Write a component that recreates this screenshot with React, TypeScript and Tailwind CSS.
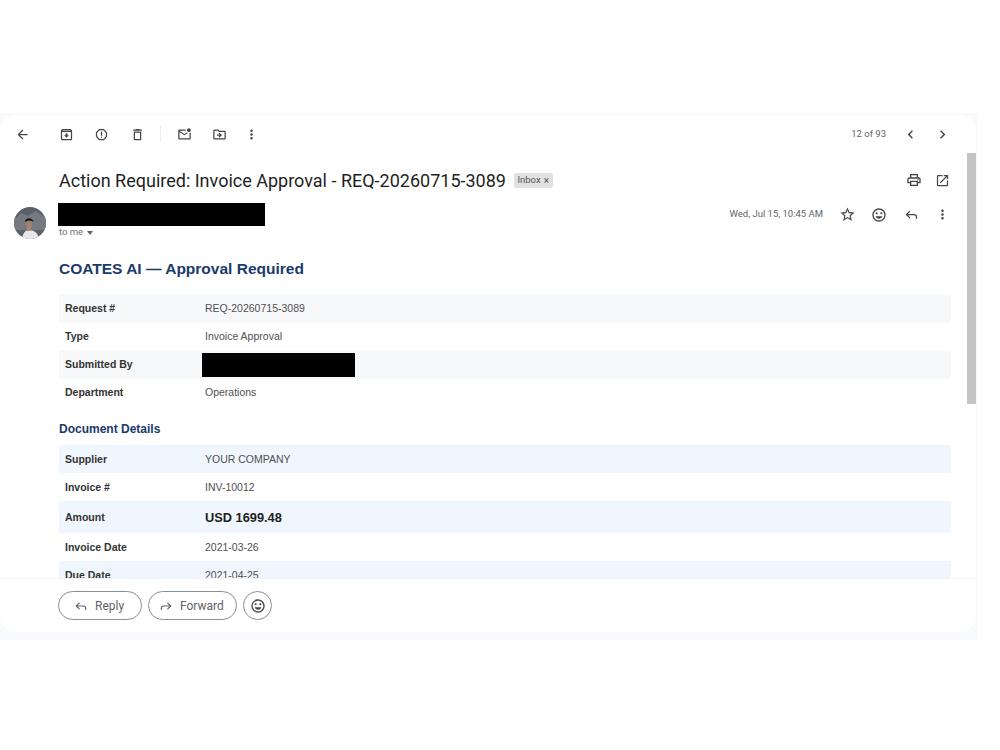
import type { ReactNode } from 'react';
import { Forward, Reply } from 'lucide-react';
import {
  MdArrowBack,
  MdChevronLeft,
  MdChevronRight,
  MdMoreVert,
  MdOpenInNew,
  MdOutlineArchive,
  MdOutlineDelete,
  MdOutlineDriveFileMove,
  MdOutlineInsertEmoticon,
  MdOutlineMarkEmailUnread,
  MdOutlinePrint,
  MdOutlineReport,
  MdStarBorder,
} from 'react-icons/md';

const requestRows = [
  { label: 'Request #', value: 'REQ-20260715-3089', shaded: true },
  { label: 'Type', value: 'Invoice Approval' },
  { label: 'Submitted By', redacted: true, shaded: true },
  { label: 'Department', value: 'Operations' },
];

const documentRows = [
  { label: 'Supplier', value: 'YOUR COMPANY', shaded: true },
  { label: 'Invoice #', value: 'INV-10012' },
  { label: 'Amount', value: 'USD 1699.48', shaded: true, big: true },
  { label: 'Invoice Date', value: '2021-03-26' },
  { label: 'Due Date', value: '2021-04-25', shaded: true },
];

type RowProps = {
  label: string;
  value?: string;
  shaded?: boolean;
  redacted?: boolean;
  big?: boolean;
  tint: string;
};

const Row = ({ label, value, shaded, redacted, big, tint }: RowProps) => (
  <div className={`flex items-center pl-[6px] ${big ? 'h-[32px]' : 'h-[28px]'} ${shaded ? tint : ''}`}>
    <div className="w-[140px] shrink-0 text-[10.5px] font-bold text-[#333333]">{label}</div>
    {redacted ? (
      <div className="-ml-[3px] h-[24px] w-[153px] bg-black" />
    ) : (
      <div className={big ? 'text-[12.8px] font-bold text-[#222222]' : 'text-[10.5px] text-[#505050]'}>{value}</div>
    )}
  </div>
);

const IconSlot = ({ children, className = 'w-[32px]' }: { children: ReactNode; className?: string }) => (
  <div className={`flex items-center justify-center text-[#444746] ${className}`}>{children}</div>
);

const Avatar = () => (
  <svg width="32" height="32" viewBox="0 0 32 32" className="shrink-0 rounded-full">
    <rect width="32" height="32" fill="#5b6068" />
    <path d="M0 13 L7 6 L14 9 L22 4 L32 11 L32 23 L0 23 Z" fill="#757a80" />
    <path d="M8 32 C9 25 12 23 15 23 C19 23 24 25 25 32 Z" fill="#e6e7ea" />
    <rect x="13" y="19" width="4" height="5" fill="#a98671" />
    <circle cx="15" cy="16" r="3.6" fill="#a07f6c" />
    <path d="M11 15 C11 10 19 10 19.500 15 C17 13 14 13 11 15 Z" fill="#17181c" />
  </svg>
);

export default function App() {
  return (
    <div className="h-[750px] w-[1000px] bg-white pt-[113px] font-['Liberation_Sans',Arial,sans-serif]">
      <div className="h-[527px] w-[978px] bg-[#f8fafd] pt-[2px]">
        <div className="relative flex h-[517px] w-[976px] flex-col overflow-hidden rounded-2xl bg-white">
          {/* Toolbar */}
          <div className="flex h-[38px] shrink-0 items-center pl-[6px] pr-[18px]">
            <IconSlot><MdArrowBack size={15} /></IconSlot>
            <div className="ml-[10px] flex items-center">
              <IconSlot className="w-[36px]"><MdOutlineArchive size={15} /></IconSlot>
              <IconSlot className="w-[35px]"><MdOutlineReport size={15} /></IconSlot>
              <IconSlot className="w-[36px]"><MdOutlineDelete size={15} /></IconSlot>
              <div className="ml-[5px] mr-[5px] h-[16px] w-px bg-[#eeeeee]" />
              <IconSlot className="w-[36px]"><MdOutlineMarkEmailUnread size={15} /></IconSlot>
              <IconSlot className="w-[35px]"><MdOutlineDriveFileMove size={15} /></IconSlot>
              <IconSlot className="w-[28px]"><MdMoreVert size={15} /></IconSlot>
            </div>
            <div className="ml-auto flex items-center">
              <span className="mr-[8px] font-['Roboto',sans-serif] text-[9.5px] text-[#5f6368]">12 of 93</span>
              <IconSlot><MdChevronLeft size={17} /></IconSlot>
              <IconSlot><MdChevronRight size={17} /></IconSlot>
            </div>
          </div>

          {/* Scrollable message */}
          <div className="min-h-0 flex-1 overflow-hidden pl-[14px] pr-[25px]">
            {/* Subject */}
            <div className="flex h-[50px] items-center pt-[4px]">
              <h1 className="ml-[45px] font-['Roboto',sans-serif] text-[18px] text-[#1f1f1f]">
                Action Required: Invoice Approval - REQ-20260715-3089
              </h1>
              <span className="ml-[8px] flex h-[15px] items-center gap-[3px] rounded-[2px] bg-[#e1e1e1] px-[3.5px] font-['Roboto',sans-serif] text-[9.5px] text-[#555555]">
                Inbox <span className="text-[10px]">×</span>
              </span>
              <div className="-mr-[6px] ml-auto flex items-center text-[#444746]">
                <IconSlot className="w-[29px]"><MdOutlinePrint size={16} /></IconSlot>
                <IconSlot className="w-[29px]"><MdOpenInNew size={15} /></IconSlot>
              </div>
            </div>

            {/* Sender */}
            <div className="flex h-[46px] items-start">
              <div className="mt-[4px]"><Avatar /></div>
              <div className="ml-[12px]">
                <div className="h-[23px] w-[207px] bg-black" />
                <div className="-mt-[1px] ml-[1px] flex items-center gap-[4px] font-['Roboto',sans-serif] text-[9.5px] text-[#6f7377]">
                  to me
                  <span className="mt-[1px] h-0 w-0 border-x-[3.5px] border-t-[4px] border-x-transparent border-t-[#5f6368]" />
                </div>
              </div>
              <div className="-mr-[6px] ml-auto flex items-center pt-[3px]">
                <span className="mr-[8px] font-['Roboto',sans-serif] text-[9.5px] text-[#5f6368]">Wed, Jul 15, 10:45 AM</span>
                <IconSlot><MdStarBorder size={17} /></IconSlot>
                <IconSlot><MdOutlineInsertEmoticon size={16} /></IconSlot>
                <IconSlot><Reply size={15} strokeWidth={2} /></IconSlot>
                <IconSlot className="w-[30px]"><MdMoreVert size={15} /></IconSlot>
              </div>
            </div>

            {/* Body */}
            <div className="ml-[45px]">
              <h2 className="mt-[10px] text-[15.5px] font-bold leading-[20px] text-[#1a3a6b]">COATES AI — Approval Required</h2>
              <div className="mt-[16px]">
                {requestRows.map((row) => (
                  <Row key={row.label} {...row} tint="bg-[#f7f8fa]" />
                ))}
              </div>
              <h3 className="mb-[8px] mt-[14px] text-[12px] font-bold leading-[16px] text-[#1a3a6b]">Document Details</h3>
              <div className="[&>div]:pt-[2px]">
                {documentRows.map((row) => (
                  <Row key={row.label} {...row} tint="bg-[#f0f6fd]" />
                ))}
              </div>
            </div>
          </div>

          {/* Reply bar */}
          <div className="flex h-[54px] shrink-0 items-start gap-[6px] border-t border-[#f3f3f3] pl-[58px] pt-[12px]">
            <button className="flex h-[29px] w-[84px] items-center gap-[7px] rounded-full border border-[#8a8d91] pl-[15px] font-['Roboto',sans-serif] text-[12px] text-[#5f6368]">
              <Reply size={14} strokeWidth={2} /> Reply
            </button>
            <button className="flex h-[29px] w-[89px] items-center gap-[7px] rounded-full border border-[#8a8d91] pl-[10px] font-['Roboto',sans-serif] text-[12px] text-[#5f6368]">
              <Forward size={14} strokeWidth={2} /> Forward
            </button>
            <button className="flex h-[29px] w-[29px] items-center justify-center rounded-full border border-[#8a8d91] text-[#444746]">
              <MdOutlineInsertEmoticon size={16} />
            </button>
          </div>

          {/* Scrollbar thumb */}
          <div className="absolute right-0 top-[38px] h-[251px] w-[9px] bg-[#c4c4c4]" />
        </div>
      </div>
    </div>
  );
}
